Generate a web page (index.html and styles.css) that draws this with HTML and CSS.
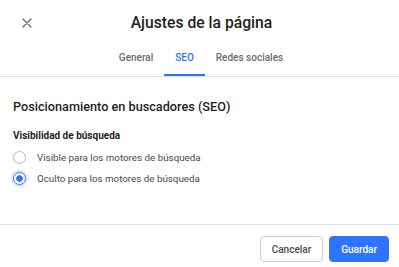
FILE: index.html
```html
<!DOCTYPE html>
<html lang="es">
<head>
<meta charset="utf-8">
<title>Ajustes de la página</title>
<link rel="stylesheet" href="styles.css">
</head>
<body>
<div class="dialog">
  <header class="header">
    <button class="close" aria-label="Cerrar">
      <svg width="10" height="10" viewBox="0 0 10 10"><path d="M1 1L9 9M9 1L1 9" stroke="#6a6a6a" stroke-width="1.3" stroke-linecap="round"/></svg>
    </button>
    <h1 class="title">Ajustes de la página</h1>
    <span></span>
  </header>
  <nav class="tabs">
    <span class="tab">General</span>
    <span class="tab active">SEO</span>
    <span class="tab">Redes sociales</span>
  </nav>
  <main class="content">
    <h2 class="heading">Posicionamiento en buscadores (SEO)</h2>
    <div class="label">Visibilidad de búsqueda</div>
    <div class="options">
      <label class="option"><span class="radio"></span><span>Visible para los motores de búsqueda</span></label>
      <label class="option"><span class="radio checked"></span><span>Oculto para los motores de búsqueda</span></label>
    </div>
  </main>
  <footer class="footer">
    <button class="btn secondary">Cancelar</button>
    <button class="btn primary">Guardar</button>
  </footer>
</div>
</body>
</html>
```
FILE: styles.css
```css
* { box-sizing: border-box; }
html, body { margin: 0; padding: 0; background: #fff; }
body { font-family: Roboto, "Noto Sans", sans-serif; color: #1f1f1f; }
.dialog { height: 100vh; display: flex; flex-direction: column; }
.header {
  height: 45px;
  display: grid;
  grid-template-columns: 1fr auto 1fr;
  align-items: center;
  padding: 0 0 0 4px;
}
.close {
  width: 20px; height: 20px; padding: 0; border: 0; background: none;
  display: flex; align-items: center; justify-content: center;
  justify-self: start; margin-left: 13px;
}
.title { margin: 0; font-size: 15.7px; font-weight: 500; line-height: 20px; color: #1f1f1f; }
.tabs {
  display: flex; justify-content: center;
  border-bottom: 1px solid #e2e2e2;
  padding-left: 3px;
}
.tab {
  padding: 5px 11px 8px;
  font-size: 10px; line-height: 16px; font-weight: 500;
  color: #6b6b6b;
  border-bottom: 2px solid transparent;
}
.tab.active { color: #2f74ff; border-bottom-color: #2f74ff; }
.content { flex: 1; padding: 20px 13px 0; }
.heading { margin: 0; font-size: 12.7px; line-height: 20px; font-weight: 500; color: #1f1f1f; }
.label { margin-top: 11px; font-size: 10px; line-height: 16px; font-weight: 700; color: #1f1f1f; }
.options { margin-top: 3px; display: flex; flex-direction: column; }
.option { display: flex; align-items: center; gap: 11px; height: 21px; font-size: 9.8px; color: #4a4a4a; }
.radio {
  width: 13px; height: 13px; border-radius: 50%;
  border: 1px solid #b8b8b8; background: #fff; flex: none;
}
.radio.checked {
  border-color: #2f74ff;
  background: radial-gradient(circle, #2f74ff 0 3px, #fff 3.5px);
  box-shadow: 0 0 0 2px #d6e4ff;
}
.footer {
  border-top: 1px solid #e2e2e2;
  display: flex; justify-content: flex-end; gap: 6px;
  padding: 11px 10px 5px;
}
.btn {
  height: 26px; padding: 0 11px; border-radius: 4px;
  font-family: inherit; font-size: 10px; font-weight: 500;
}
.btn.secondary { background: #fff; border: 1px solid #cfcfcf; color: #4a4a4a; }
.btn.primary { background: #2f74ff; border: 1px solid #2f74ff; color: #fff; }
```
